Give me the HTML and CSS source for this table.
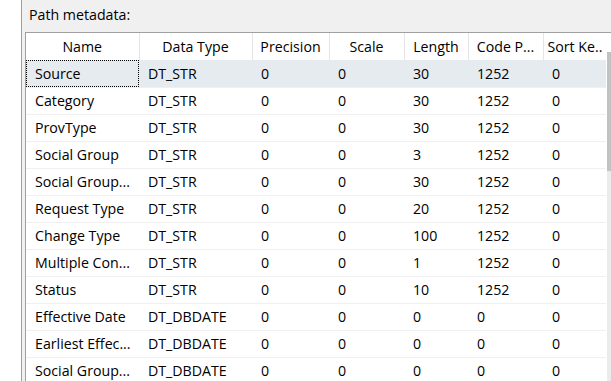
FILE: index.html
```html
<!DOCTYPE html>
<html>
<head>
<meta charset="utf-8">
<link rel="stylesheet" href="styles.css">
</head>
<body>
<div class="app">
  <div class="side"></div>
  <div class="main">
    <div class="label">Path metadata:</div>
    <div class="grid">
      <div class="table-wrap">
        <table class="meta">
          <colgroup>
            <col class="c1"><col class="c2"><col class="c3"><col class="c4"><col class="c5"><col class="c6"><col class="c7">
          </colgroup>
          <thead>
            <tr><th>Name</th><th>Data Type</th><th>Precision</th><th>Scale</th><th>Length</th><th>Code P...</th><th>Sort Ke..</th></tr>
          </thead>
          <tbody>
            <tr class="sel"><td class="focus">Source</td><td>DT_STR</td><td>0</td><td>0</td><td>30</td><td>1252</td><td>0</td></tr>
            <tr><td>Category</td><td>DT_STR</td><td>0</td><td>0</td><td>30</td><td>1252</td><td>0</td></tr>
            <tr><td>ProvType</td><td>DT_STR</td><td>0</td><td>0</td><td>30</td><td>1252</td><td>0</td></tr>
            <tr><td>Social Group</td><td>DT_STR</td><td>0</td><td>0</td><td>3</td><td>1252</td><td>0</td></tr>
            <tr><td>Social Group...</td><td>DT_STR</td><td>0</td><td>0</td><td>30</td><td>1252</td><td>0</td></tr>
            <tr><td>Request Type</td><td>DT_STR</td><td>0</td><td>0</td><td>20</td><td>1252</td><td>0</td></tr>
            <tr><td>Change Type</td><td>DT_STR</td><td>0</td><td>0</td><td>100</td><td>1252</td><td>0</td></tr>
            <tr><td>Multiple Con...</td><td>DT_STR</td><td>0</td><td>0</td><td>1</td><td>1252</td><td>0</td></tr>
            <tr><td>Status</td><td>DT_STR</td><td>0</td><td>0</td><td>10</td><td>1252</td><td>0</td></tr>
            <tr><td>Effective Date</td><td>DT_DBDATE</td><td>0</td><td>0</td><td>0</td><td>0</td><td>0</td></tr>
            <tr><td>Earliest Effec...</td><td>DT_DBDATE</td><td>0</td><td>0</td><td>0</td><td>0</td><td>0</td></tr>
            <tr><td>Social Group...</td><td>DT_DBDATE</td><td>0</td><td>0</td><td>0</td><td>0</td><td>0</td></tr>
          </tbody>
        </table>
      </div>
      <div class="scroll"><div class="thumb"></div></div>
    </div>
  </div>
</div>
</body>
</html>
```
FILE: styles.css
```css
html, body {
  margin: 0;
  padding: 0;
  height: 100%;
  overflow: hidden;
}
body {
  background: #f0f0f0;
  font-family: "Open Sans", "Noto Sans", sans-serif;
  font-size: 14.2px;
  color: #000;
}
.app {
  display: flex;
  height: 381px;
}
.side {
  width: 21px;
  flex: none;
  background: #fff;
  border-right: 1px solid #a0a0a0;
}
.main {
  flex: 1;
  display: flex;
  flex-direction: column;
  padding-left: 3px;
  min-width: 0;
}
.label {
  padding: 5px 0 0 4px;
  height: 32px;
  line-height: 20px;
  box-sizing: border-box;
  flex: none;
}
.grid {
  flex: 1;
  display: flex;
  border-top: 1px solid #a0a0a0;
  border-left: 1px solid #a0a0a0;
  background: #fff;
  min-height: 0;
}
.table-wrap {
  width: 581px;
  flex: none;
  overflow: hidden;
}
.meta {
  border-collapse: collapse;
  table-layout: fixed;
  width: 580px;
}
.c1 { width: 113px; }
.c2 { width: 113px; }
.c3 { width: 77px; }
.c4 { width: 75px; }
.c5 { width: 64px; }
.c6 { width: 75px; }
.c7 { width: 63px; }
.meta th {
  height: 27px;
  padding: 0 4px;
  font-weight: normal;
  text-align: center;
  border-right: 1px solid #e5e5e5;
  white-space: nowrap;
  overflow: hidden;
}
.meta th:last-child {
  border-right: none;
}
.meta td {
  height: 27px;
  padding: 0 0 0 9px;
  border-bottom: 1px solid #f0f0f0;
  white-space: nowrap;
  overflow: hidden;
  box-sizing: border-box;
}
.meta tr.sel td {
  background: #e6ebf0;
}
.meta td.focus {
  outline: 1px dotted #000;
  outline-offset: -1px;
}
.scroll {
  flex: 1;
  display: flex;
  flex-direction: column;
  align-items: flex-end;
  padding-top: 19px;
}
.scroll::after {
  content: "";
  flex: 1;
  width: 4px;
  background: #ebebeb;
}
.thumb {
  width: 4px;
  height: 119px;
  background: #c2c2c2;
}
```
